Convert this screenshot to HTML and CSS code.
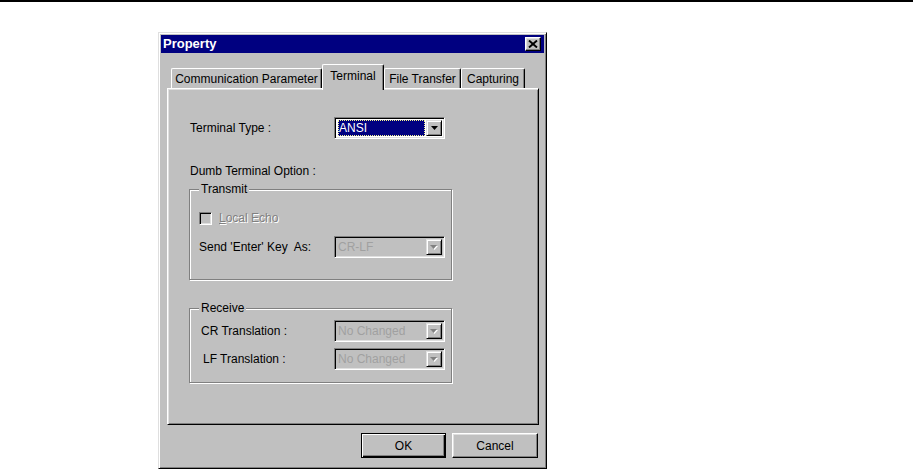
FILE: index.html
```html
<!DOCTYPE html>
<html lang="en">
<head>
    <meta charset="UTF-8">
    <meta name="viewport" content="width=device-width, initial-scale=1.0">
    <title>Property</title>
    <link rel="stylesheet" href="styles.css">
</head>
<body>
    <div class="rule"></div>

    <div class="dialog">
        <div class="titlebar">
            <span class="title">Property</span>
            <span class="close">
                <svg width="10" height="8" viewBox="0 0 10 8">
                    <path d="M1 0.5 L9 7.5 M9 0.5 L1 7.5" stroke="#000" stroke-width="1.9" fill="none"/>
                </svg>
            </span>
        </div>

        <div class="tabs">
            <div class="tab tab-comm">Communication Parameter</div>
            <div class="tab tab-active tab-term">Terminal</div>
            <div class="tab tab-file">File Transfer</div>
            <div class="tab tab-cap">Capturing</div>
        </div>

        <div class="panel">
            <div class="row">
                <span class="label label-top">Terminal Type :</span>
                <div class="combo">
                    <div class="combo-value"><span class="selected">ANSI</span></div>
                    <span class="combo-btn">
                        <svg width="7" height="4" viewBox="0 0 7 4"><path d="M0 0 H7 L3.5 4 Z" fill="#000"/></svg>
                    </span>
                </div>
            </div>

            <div class="caption">Dumb Terminal Option :</div>

            <div class="group group-transmit">
                <span class="group-title">Transmit</span>
                <div class="check-row">
                    <span class="checkbox"></span>
                    <span class="disabled-text"><u>L</u>ocal Echo</span>
                </div>
                <div class="row row-send">
                    <span class="label">Send 'Enter' Key&nbsp; As:</span>
                    <div class="combo disabled">
                        <div class="combo-value">CR-LF</div>
                        <span class="combo-btn">
                            <svg width="8" height="5" viewBox="0 0 8 5"><path d="M1 1 H8 L4.5 5 Z" fill="#fff"/><path d="M0 0 H7 L3.5 4 Z" fill="#808080"/></svg>
                        </span>
                    </div>
                </div>
            </div>

            <div class="group group-receive">
                <span class="group-title">Receive</span>
                <div class="row">
                    <span class="label label-cr">CR Translation :</span>
                    <div class="combo disabled">
                        <div class="combo-value">No Changed</div>
                        <span class="combo-btn">
                            <svg width="8" height="5" viewBox="0 0 8 5"><path d="M1 1 H8 L4.5 5 Z" fill="#fff"/><path d="M0 0 H7 L3.5 4 Z" fill="#808080"/></svg>
                        </span>
                    </div>
                </div>
                <div class="row row-lf">
                    <span class="label label-lf">LF Translation :</span>
                    <div class="combo disabled">
                        <div class="combo-value">No Changed</div>
                        <span class="combo-btn">
                            <svg width="8" height="5" viewBox="0 0 8 5"><path d="M1 1 H8 L4.5 5 Z" fill="#fff"/><path d="M0 0 H7 L3.5 4 Z" fill="#808080"/></svg>
                        </span>
                    </div>
                </div>
            </div>
        </div>

        <div class="buttons">
            <button class="btn btn-default">OK</button>
            <button class="btn btn-cancel">Cancel</button>
        </div>
    </div>
</body>
</html>
```

FILE: styles.css
```css
:root {
    --face: #c0c0c0;
    --light: #dfdfdf;
    --shadow: #808080;
    --navy: #000080;
}

body {
    margin: 0;
    background: #fff;
    color: #000;
    font-family: 'Liberation Sans', Arial, sans-serif;
    font-size: 12px;
    line-height: 14px;
}

.rule {
    height: 2px;
    background: #000;
}

/* window frame */
.dialog {
    width: 389px;
    height: 437px;
    box-sizing: border-box;
    margin: 30px 0 0 158px;
    padding: 2px;
    background: var(--face);
    border: 1px solid;
    border-color: var(--light) #000 #000 var(--light);
    box-shadow: inset 1px 1px #fff, inset -1px -1px var(--shadow);
}

.titlebar {
    height: 18px;
    background: var(--navy);
    display: flex;
    align-items: center;
    justify-content: space-between;
    padding: 0 3px 0 2px;
}

.title {
    color: #fff;
    font-weight: bold;
    font-size: 13px;
}

.close {
    width: 16px;
    height: 14px;
    box-sizing: border-box;
    background: var(--face);
    border: 1px solid;
    border-color: #fff #000 #000 #fff;
    box-shadow: inset -1px -1px var(--shadow), inset 1px 1px var(--light);
    display: flex;
    align-items: center;
    justify-content: center;
}

/* tabs */
.tabs {
    display: flex;
    align-items: flex-end;
    height: 24px;
    margin: 11px 0 0 10px;
}

.tab {
    height: 20px;
    box-sizing: border-box;
    background: var(--face);
    border-top: 1px solid #fff;
    border-left: 1px solid #fff;
    border-right: 1px solid #000;
    border-radius: 2px 2px 0 0;
    box-shadow: inset -1px 0 var(--shadow);
    display: flex;
    align-items: center;
    justify-content: center;
    padding-top: 1px;
}

.tab-comm { width: 151px; }
.tab-term { width: 62px; }
.tab-file { width: 77px; }
.tab-cap { width: 64px; }

.tab-active {
    height: 26px;
    margin-bottom: -2px;
    padding: 0 0 4px;
    position: relative;
    z-index: 1;
}

.panel {
    width: 372px;
    height: 337px;
    box-sizing: border-box;
    margin-left: 6px;
    padding: 28px 0 0 21px;
    border: 1px solid;
    border-color: #fff #000 #000 #fff;
    box-shadow: inset 1px 1px var(--light), inset -1px -1px var(--shadow);
}

.row {
    display: flex;
    align-items: center;
}

.label {
    width: 135px;
    flex-shrink: 0;
}

.label-top {
    width: 144px;
    padding-left: 1px;
}

.label-cr { width: 133px; padding-left: 2px; }
.label-lf { width: 131px; padding-left: 4px; }

.caption {
    margin: 25px 0 0 1px;
}

/* etched group boxes */
.group {
    position: relative;
    width: 263px;
    box-sizing: border-box;
    border: 1px solid var(--shadow);
    box-shadow: inset 1px 1px #fff, 1px 1px #fff;
    padding-left: 9px;
}

.group-title {
    position: absolute;
    top: -8px;
    left: 9px;
    padding: 0 2px;
    background: var(--face);
}

.group-transmit {
    margin-top: 11px;
    padding-top: 21px;
    padding-bottom: 21px;
}

.group-receive {
    margin-top: 28px;
    padding-top: 11px;
    padding-bottom: 12px;
}

.check-row {
    display: flex;
    align-items: center;
    height: 14px;
}

.checkbox {
    width: 13px;
    height: 13px;
    box-sizing: border-box;
    margin-right: 7px;
    background: var(--face);
    border: 1px solid;
    border-color: var(--shadow) #fff #fff var(--shadow);
    box-shadow: inset 1px 1px #000, inset -1px -1px var(--light);
}

.disabled-text {
    color: var(--shadow);
    text-shadow: 1px 1px 0 #fff;
}

.row-send { margin-top: 11px; }
.row-lf { margin-top: 6px; }

/* combo boxes */
.combo {
    width: 111px;
    height: 22px;
    box-sizing: border-box;
    padding: 2px;
    display: flex;
    background: #fff;
    border: 1px solid;
    border-color: var(--shadow) #fff #fff var(--shadow);
    box-shadow: inset 1px 1px #000, inset -1px -1px var(--light);
}

.combo-value {
    flex: 1;
    display: flex;
    align-items: center;
    padding-left: 1px;
}

.selected {
    flex: 1;
    align-self: stretch;
    margin: 0 1px 0 0;
    display: flex;
    align-items: center;
    background: var(--navy);
    color: #fff;
    border: 1px dotted #f4f490;
}

.combo-btn {
    width: 16px;
    box-sizing: border-box;
    background: var(--face);
    border: 1px solid;
    border-color: var(--light) #000 #000 var(--light);
    box-shadow: inset 1px 1px #fff, inset -1px -1px var(--shadow);
    display: flex;
    align-items: center;
    justify-content: center;
}

.combo.disabled {
    background: var(--face);
}

.combo.disabled .combo-value {
    color: #a0a0a0;
}

/* buttons */
.buttons {
    display: flex;
    justify-content: flex-end;
    gap: 6px;
    width: 372px;
    box-sizing: border-box;
    margin: 8px 0 0 6px;
    padding-right: 1px;
}

.btn {
    width: 86px;
    height: 25px;
    padding: 0;
    font-family: 'Liberation Sans', Arial, sans-serif;
    font-size: 12px;
    color: #000;
    background: var(--face);
    border: 1px solid;
    border-color: #fff #000 #000 #fff;
    box-shadow: inset -1px -1px var(--shadow), inset 1px 1px var(--light);
}

.btn-default {
    width: 85px;
    border-color: #000;
    box-shadow: inset 1px 1px #fff, inset -1px -1px #000, inset -2px -2px var(--shadow);
}
```
